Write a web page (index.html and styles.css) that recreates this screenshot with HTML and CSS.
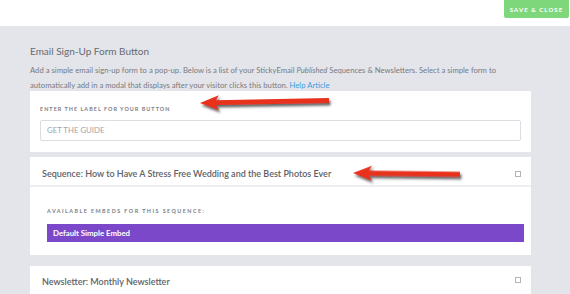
FILE: index.html
```html
<!DOCTYPE html>
<html lang="en">
<head>
    <meta charset="UTF-8">
    <meta name="viewport" content="width=device-width, initial-scale=1.0">
    <title>Email Sign-Up Form Button</title>
    <link rel="stylesheet" href="styles.css">
</head>
<body>
    <div class="top-bar">
        <button type="button" class="save-btn">SAVE &amp; CLOSE</button>
    </div>

    <div class="main">
        <h1 class="title">Email Sign-Up Form Button</h1>
        <p class="desc">Add a simple email sign-up form to a pop-up. Below is a list of your StickyEmail <em>Published</em> Sequences &amp; Newsletters. Select a simple form to automatically add in a modal that displays after your visitor clicks this button. <a href="#">Help Article</a></p>

        <div class="card label-card">
            <label for="buttonLabel" class="small-label">ENTER THE LABEL FOR YOUR BUTTON</label>
            <input type="text" id="buttonLabel" placeholder="GET THE GUIDE">
        </div>

        <div class="card seq-card">
            <div class="card-head">
                <span>Sequence: How to Have A Stress Free Wedding and the Best Photos Ever</span>
                <span class="check"></span>
            </div>
            <div class="card-body">
                <div class="small-label wide">AVAILABLE EMBEDS FOR THIS SEQUENCE:</div>
                <div class="embed">Default Simple Embed</div>
            </div>
        </div>

        <div class="card news-card">
            <div class="card-head">
                <span>Newsletter: Monthly Newsletter</span>
                <span class="check"></span>
            </div>
        </div>
    </div>

    <!-- annotation arrows drawn over the screenshot -->
    <svg class="arrows" width="570" height="294" viewBox="0 0 570 294">
        <defs>
            <filter id="shadow" x="-20%" y="-100%" width="140%" height="300%">
                <feDropShadow dx="1.5" dy="2.5" stdDeviation="1.3" flood-color="#333" flood-opacity="0.75"/>
            </filter>
        </defs>
        <g filter="url(#shadow)" fill="#e8301f">
            <polygon transform="translate(200,103) rotate(-1.1)" points="0,0 19,-7.5 16,-2.4 129,-2.4 129,2.4 16,2.4 19,7.5"/>
            <polygon transform="translate(353,173) rotate(0.7)" points="0,0 19,-7.5 16,-2.4 107,-2.4 107,2.4 16,2.4 19,7.5"/>
        </g>
    </svg>
</body>
</html>
```

FILE: styles.css
```css
body {
    font-family: Lato, "Open Sans", sans-serif;
    background-color: #e4e5ea;
    margin: 0;
    padding: 0;
    position: relative;
    height: 294px;
    overflow: hidden;
}

.top-bar {
    height: 26px;
    background: #fff;
    display: flex;
    justify-content: flex-end;
    padding-right: 1px;
}

.save-btn {
    width: 65px;
    height: 18px;
    padding: 0;
    border: none;
    border-radius: 0 0 2px 2px;
    background-color: #7fd77c;
    color: #fff;
    font-family: Lato, sans-serif;
    font-size: 6px;
    font-weight: bold;
    letter-spacing: 1.1px;
}

.main {
    padding: 18px 39px 0 30px;
}

.title {
    margin: 0;
    font-size: 10px;
    line-height: 14px;
    font-weight: normal;
    color: #666a70;
}

.desc {
    margin: 4.5px 0 -2px;
    font-size: 7.7px;
    line-height: 15px;
    color: #777a80;
}

.desc a {
    color: #3d9be0;
    text-decoration: none;
}

.card {
    background: #fff;
}

.label-card {
    padding: 15px 10px 11px;
    display: flex;
    flex-direction: column;
}

.small-label {
    font-size: 5.4px;
    font-weight: bold;
    letter-spacing: 1.05px;
    color: #7a7d85;
}

.small-label.wide {
    letter-spacing: 1.45px;
}

.label-card input {
    margin-top: 8px;
    height: 21px;
    box-sizing: border-box;
    border: 1px solid #dcdde2;
    border-radius: 2px;
    padding: 0 6px;
    font-family: Lato, sans-serif;
    font-size: 7.8px;
}

.label-card input::placeholder {
    color: #a0a3a8;
}

.seq-card {
    margin-top: 5px;
}

.card-head {
    display: flex;
    justify-content: space-between;
    align-items: center;
    padding: 12px 10px 6px 12px;
    font-size: 9px;
    line-height: 10px;
    font-weight: 600;
    color: #5e6168;
    border-bottom: 2px solid #eceef2;
}

.check {
    width: 4px;
    height: 4px;
    border: 1px solid #b0b3b8;
}

.card-body {
    padding: 21px 7px 13px 17px;
}

.embed {
    margin-top: 10px;
    height: 18px;
    line-height: 18px;
    padding-left: 6px;
    background-color: #7b48c9;
    color: #fff;
    font-size: 7.8px;
    font-weight: bold;
}

.news-card {
    margin-top: 11px;
}

.news-card .card-head {
    padding-top: 11px;
    border-bottom: none;
    height: 40px;
    align-items: flex-start;
}

.arrows {
    position: absolute;
    top: 0;
    left: 0;
    pointer-events: none;
}
```
